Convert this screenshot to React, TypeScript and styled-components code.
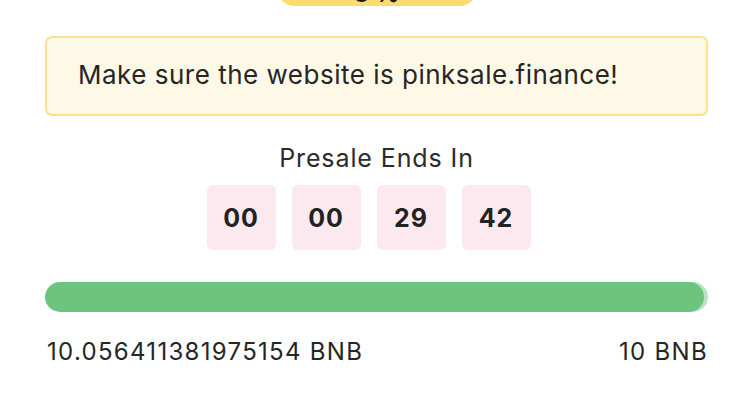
import React from "react";
import styled, { createGlobalStyle } from "styled-components";

const GlobalStyle = createGlobalStyle`
  html, body {
    margin: 0;
    padding: 0;
    background: #ffffff;
  }
  body {
    font-family: Inter, "Noto Sans", "DejaVu Sans", sans-serif;
    color: #262626;
    overflow: hidden;
  }
`;

const Page = styled.div`
  display: flex;
  flex-direction: column;
  padding: 0 46px 0 45px;
`;

const Badge = styled.div`
  align-self: center;
  width: 198px;
  height: 34px;
  margin-top: -28px;
  background: #fadd70;
  border-radius: 0 0 16px 16px;
  display: flex;
  justify-content: center;
  align-items: flex-end;
  font-size: 24px;
  font-weight: 700;
  line-height: 1;
  color: #1a1a1a;
  padding-bottom: 0;
  box-sizing: border-box;
`;

const Notice = styled.div`
  margin-top: 30px;
  height: 80px;
  box-sizing: border-box;
  border: 2px solid #f8e28d;
  border-radius: 7px;
  background: #fdf9e6;
  display: flex;
  align-items: center;
  padding-left: 31px;
  padding-bottom: 3px;
  font-size: 26px;
  letter-spacing: 0.5px;
  color: #262626;
`;

const Title = styled.div`
  margin-top: 27px;
  text-align: center;
  font-size: 25px;
  letter-spacing: 0.9px;
  line-height: 30px;
  color: #2b2b2b;
`;

const Timer = styled.div`
  display: flex;
  justify-content: center;
  margin-top: 12px;
`;

const TimeBox = styled.div`
  width: 69px;
  height: 65px;
  margin-right: 16px;
  border-radius: 6px;
  background: #fbe9ef;
  display: flex;
  align-items: center;
  justify-content: center;
  font-size: 25px;
  font-weight: 700;
  letter-spacing: 1px;
  color: #222222;
`;

const Track = styled.div`
  margin-top: 32px;
  height: 30px;
  border-radius: 15px;
  background: #b9e3c2;
  overflow: hidden;
`;

const Fill = styled.div`
  height: 100%;
  border-radius: 15px;
  background: #6dc47f;
`;

const Amounts = styled.div`
  display: flex;
  justify-content: space-between;
  margin-top: 25px;
  padding: 0 0 0 2px;
  font-size: 24px;
  letter-spacing: 1.3px;
  line-height: 30px;
  color: #262626;
`;

const time = ["00", "00", "29", "42"];

export default function App() {
  return (
    <>
      <GlobalStyle />
      <Page>
        <Badge>3 %</Badge>
        <Notice>Make sure the website is pinksale.finance!</Notice>
        <Title>Presale Ends In</Title>
        <Timer>
          {time.map((t, i) => (
            <TimeBox key={i}>{t}</TimeBox>
          ))}
        </Timer>
        <Track>
          <Fill style={{ width: "99.4%" }} />
        </Track>
        <Amounts>
          <span>10.056411381975154 BNB</span>
          <span>10 BNB</span>
        </Amounts>
      </Page>
    </>
  );
}
